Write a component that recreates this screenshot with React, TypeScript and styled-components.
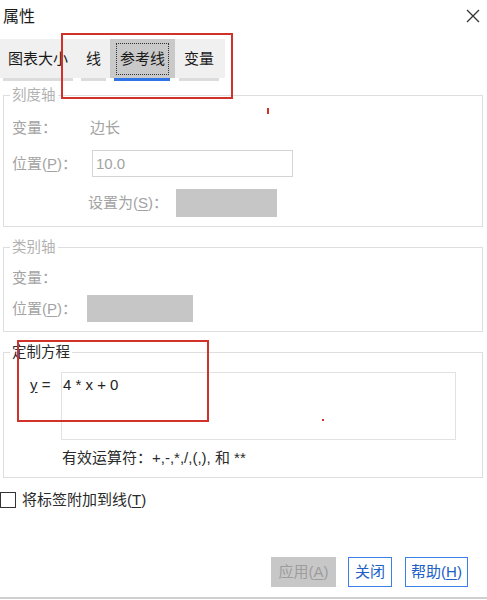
import React from "react";
import styled, { createGlobalStyle } from "styled-components";

const Global = createGlobalStyle`
  html, body { margin: 0; padding: 0; background: #fff; }
  body { font-family: "Liberation Sans", "Noto Sans CJK SC", sans-serif; color: #222; }
  * { box-sizing: border-box; }
`;

const Window = styled.div`
  position: relative;
  width: 487px;
  height: 600px;
  overflow: hidden;
  background: #fff;
  display: flex;
  flex-direction: column;
`;

const TitleBar = styled.div`
  height: 33px;
  display: flex;
  align-items: center;
  justify-content: space-between;
  padding: 0 7px 0 3px;
`;

const Title = styled.span`
  font-size: 16px;
  line-height: 18px;
  color: #1a1a1a;
`;

const CloseBtn = styled.span`
  width: 14px;
  height: 14px;
  display: flex;
  margin-top: -1px;
`;

const TabBar = styled.div`
  margin-top: 6px;
  width: 225px;
  display: flex;
  background: linear-gradient(#f0f0f0, #f0f0f0) top left / 100% 39px no-repeat;
`;

const Tab = styled.div<{ $ml: number }>`
  margin-left: ${(p) => p.$ml}px;
  display: flex;
  flex-direction: column;
`;

const TabLabel = styled.div<{ $pad: number; $active?: boolean }>`
  position: relative;
  height: 39px;
  padding: 0 ${(p) => p.$pad}px;
  display: flex;
  align-items: center;
  font-size: 15px;
  line-height: 18px;
  color: #1a1a1a;
  white-space: nowrap;
  overflow: hidden;
  background: ${(p) => (p.$active ? "#c9c9c9" : "transparent")};
  ${(p) =>
    p.$active
      ? `&::after { content: ""; position: absolute; left: 6px; right: 6px; top: 4px; bottom: 3px; border: 1px dotted #333; }`
      : ""}
`;

const TabLine = styled.div<{ $active?: boolean; $l?: number; $r?: number }>`
  height: 3px;
  margin: 0 ${(p) => p.$r ?? 0}px 0 ${(p) => p.$l ?? 0}px;
  background: ${(p) => (p.$active ? "#2f74e6" : "#dcdcdc")};
`;

const Group = styled.fieldset<{ $mt: number; $pt: number; $pb: number }>`
  margin: ${(p) => p.$mt}px 4px 0 3px;
  padding: ${(p) => p.$pt}px 0 ${(p) => p.$pb}px 6px;
  border: 1px solid #dedede;
  min-width: 0;
`;

const Legend = styled.legend<{ $dim?: boolean }>`
  padding: 0 2px;
  font-size: 14.5px;
  line-height: 16px;
  color: ${(p) => (p.$dim ? "#b2b2b2" : "#2a2a2a")};
`;

const Row = styled.div<{ $h: number; $mt?: number; $pl?: number }>`
  height: ${(p) => p.$h}px;
  margin-top: ${(p) => p.$mt ?? 0}px;
  padding-left: ${(p) => 2 + (p.$pl ?? 0)}px;
  display: flex;
  align-items: center;
`;

const Label = styled.span<{ $w?: number; $dim?: boolean }>`
  ${(p) => (p.$w ? `width: ${p.$w}px; flex: none;` : "")}
  font-size: 15px;
  line-height: 18px;
  white-space: nowrap;
  color: ${(p) => (p.$dim ? "#a3a3a3" : "#2a2a2a")};
`;

const U = styled.span`
  text-decoration: underline;
  text-underline-offset: 2px;
`;

const TextBox = styled.div<{ $w: number }>`
  width: ${(p) => p.$w}px;
  height: 100%;
  border: 1px solid #d4d4d4;
  padding-left: 3px;
  display: flex;
  align-items: center;
  font-size: 15px;
  color: #a3a3a3;
`;

const Placeholder = styled.div<{ $w: number }>`
  width: ${(p) => p.$w}px;
  height: 100%;
  background: #c6c6c6;
`;

const EqRow = styled.div`
  margin-top: 0;
  padding-left: 20px;
  display: flex;
  align-items: flex-start;
`;

const EqLabel = styled.span`
  width: 31px;
  flex: none;
  font-size: 15px;
  line-height: 18px;
  margin-top: 4px;
  color: #2a2a2a;
`;

const EqArea = styled.div`
  width: 395px;
  height: 68px;
  border: 1px solid #e2e2e2;
  padding: 3px 1px;
  font-size: 15px;
  line-height: 18px;
  color: #222;
`;

const Hint = styled.div`
  margin-top: 9px;
  padding-left: 52px;
  font-size: 15px;
  line-height: 18px;
  color: #2a2a2a;
  white-space: nowrap;
`;

const CheckRow = styled.label`
  margin-top: 14px;
  height: 16px;
  display: flex;
  align-items: center;
  gap: 6px;
`;

const Box = styled.span`
  width: 16px;
  height: 16px;
  border: 1.5px solid #333;
  background: #fff;
  flex: none;
`;

const ButtonRow = styled.div`
  margin-top: 49px;
  height: 30px;
  display: flex;
  justify-content: flex-end;
  gap: 12px;
  padding-right: 19px;
`;

const Button = styled.button<{ $w: number; $disabled?: boolean }>`
  width: ${(p) => p.$w}px;
  height: 30px;
  padding: 0;
  font-family: inherit;
  font-size: 15px;
  line-height: 18px;
  border: ${(p) => (p.$disabled ? "none" : "1.5px solid #3b7fe8")};
  background: ${(p) => (p.$disabled ? "#c7c7c7" : "#fff")};
  color: ${(p) => (p.$disabled ? "#9d9d9d" : "#2160c4")};
`;

const BottomLine = styled.div`
  margin-top: 10px;
  height: 2px;
  background: #cfcfcf;
`;

const Annot = styled.div<{ $x: number; $y: number; $w: number; $h: number }>`
  position: absolute;
  left: ${(p) => p.$x}px;
  top: ${(p) => p.$y}px;
  width: ${(p) => p.$w}px;
  height: ${(p) => p.$h}px;
  border: 2px solid #d0322a;
  pointer-events: none;
`;

const Mark = styled.div<{ $x: number; $y: number; $w: number; $h: number }>`
  position: absolute;
  left: ${(p) => p.$x}px;
  top: ${(p) => p.$y}px;
  width: ${(p) => p.$w}px;
  height: ${(p) => p.$h}px;
  background: #d0322a;
`;

export default function App() {
  return (
    <>
      <Global />
      <Window>
        <TitleBar>
          <Title>属性</Title>
          <CloseBtn>
            <svg width="14" height="14" viewBox="0 0 14 14">
              <path d="M1 1 L13 13 M13 1 L1 13" stroke="#333" strokeWidth="1.3" fill="none" />
            </svg>
          </CloseBtn>
        </TitleBar>

        <TabBar>
          <Tab $ml={3}>
            <TabLabel $pad={5}>图表大小</TabLabel>
            <TabLine />
          </Tab>
          <Tab $ml={8}>
            <TabLabel $pad={5}>线</TabLabel>
            <TabLine />
          </Tab>
          <Tab $ml={4}>
            <TabLabel $pad={10} $active>
              参考线
            </TabLabel>
            <TabLine $active $l={4} $r={5} />
          </Tab>
          <Tab $ml={4}>
            <TabLabel $pad={5}>变量</TabLabel>
            <TabLine />
          </Tab>
        </TabBar>

        <Group $mt={6} $pt={13} $pb={9}>
          <Legend $dim>刻度轴</Legend>
          <Row $h={24}>
            <Label $w={78} $dim>变量：</Label>
            <Label $dim>边长</Label>
          </Row>
          <Row $h={27} $mt={10}>
            <Label $w={80} $dim>
              位置(<U>P</U>)：
            </Label>
            <TextBox $w={201}>10.0</TextBox>
          </Row>
          <Row $h={28} $mt={12} $pl={76}>
            <Label $w={88} $dim>
              设置为(<U>S</U>)：
            </Label>
            <Placeholder $w={101} />
          </Row>
        </Group>

        <Group $mt={12} $pt={11} $pb={9}>
          <Legend $dim>类别轴</Legend>
          <Row $h={24}>
            <Label $dim>变量：</Label>
          </Row>
          <Row $h={27} $mt={5}>
            <Label $w={75} $dim>
              位置(<U>P</U>)：
            </Label>
            <Placeholder $w={106} />
          </Row>
        </Group>

        <Group $mt={12} $pt={12} $pb={10}>
          <Legend>定制方程</Legend>
          <EqRow>
            <EqLabel>
              <U>y</U> =
            </EqLabel>
            <EqArea>4 * x + 0</EqArea>
          </EqRow>
          <Hint>有效运算符：+,-,*,/,(,), 和 **</Hint>
        </Group>

        <CheckRow>
          <Box />
          <Label>
            将标签附加到线(<U>T</U>)
          </Label>
        </CheckRow>

        <ButtonRow>
          <Button $w={65} $disabled>
            应用(<U>A</U>)
          </Button>
          <Button $w={44}>关闭</Button>
          <Button $w={63} style={{ marginLeft: 1 }}>
            帮助(<U>H</U>)
          </Button>
        </ButtonRow>
        <BottomLine />

        <Annot $x={61} $y={33} $w={172} $h={66} />
        <Annot $x={17} $y={340} $w={192} $h={82} />
        <Mark $x={267} $y={108} $w={2} $h={6} />
        <Mark $x={322} $y={419} $w={2} $h={2} />
      </Window>
    </>
  );
}
